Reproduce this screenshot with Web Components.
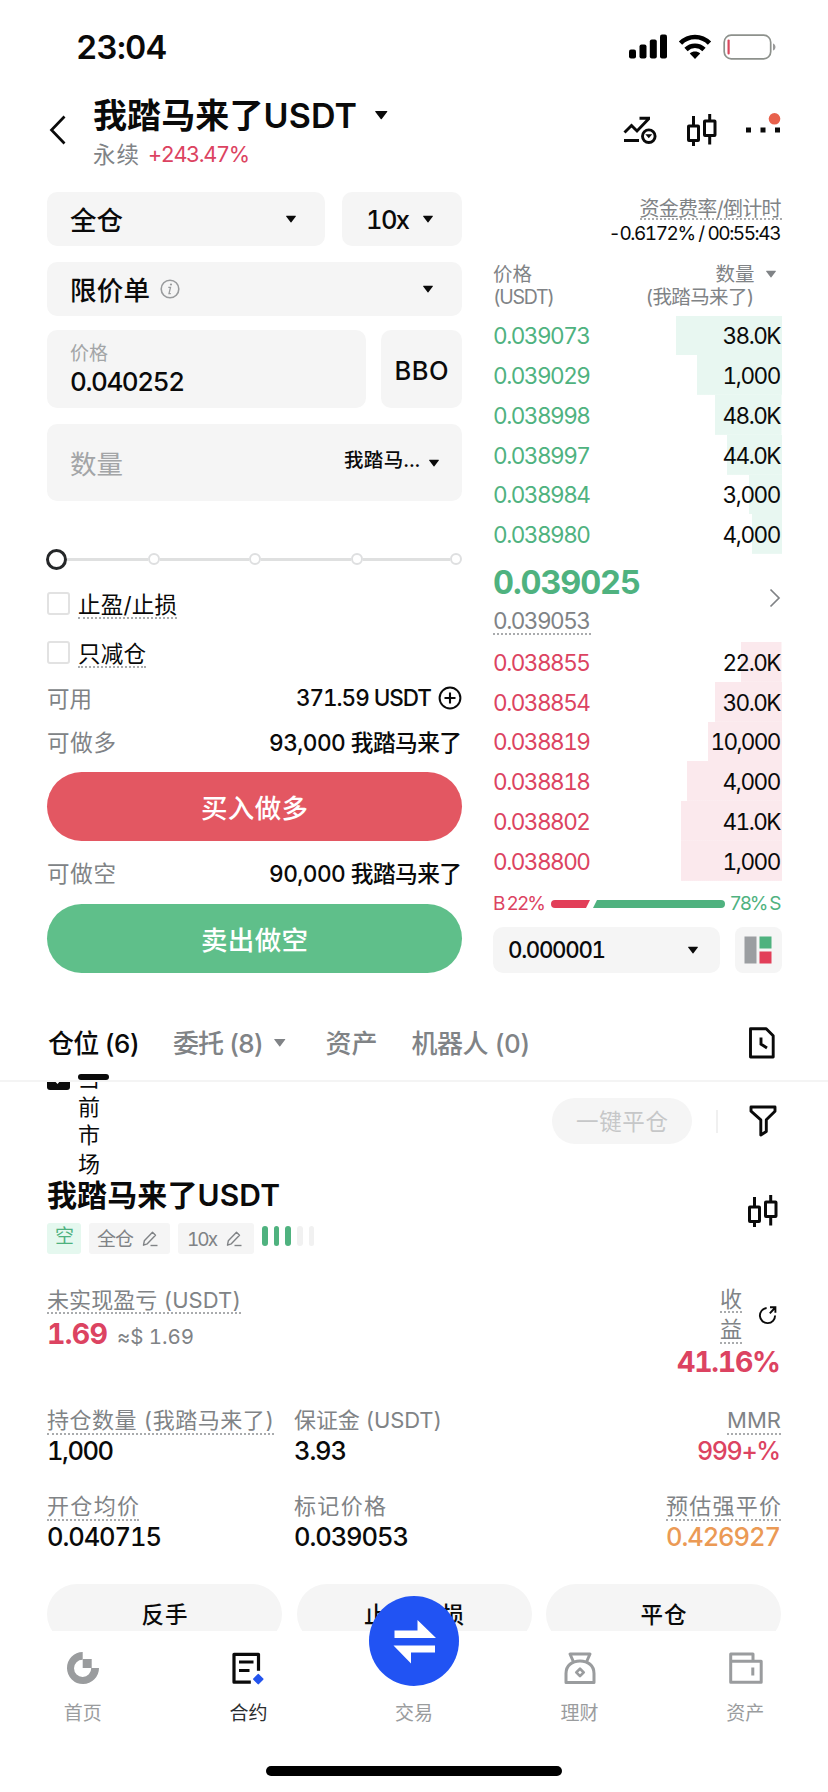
<!DOCTYPE html>
<html lang="zh-CN">
<head>
<meta charset="utf-8">
<title>合约交易</title>
<style>
body{margin:0;background:#fff;width:828px;height:1792px;overflow:hidden;color:#0a0a0a;
font-family:Inter,"Noto Sans CJK SC",sans-serif;
--gray:#808386;--box:#f5f5f5;--green:#4fb27f;--red:#dc4361}
</style>
</head>
<body>
<trade-app></trade-app>
<script>
function define(name,html,after){
  const tpl=document.createElement('template');
  tpl.innerHTML=html;
  customElements.define(name,class extends HTMLElement{
    connectedCallback(){
      if(this.shadowRoot)return;
      const r=this.attachShadow({mode:'open'});
      r.append(tpl.content.cloneNode(true));
      if(after)after(this,r);
    }
  });
}

/* Text label: s size, wt weight, c colour, lh line height, w set width (tracking adapts),
   u dotted underline, dy optical shift of the text inside its own box */
define('ui-text',`<style>
:host{display:block;flex:none;white-space:nowrap;box-sizing:content-box;font-variant-numeric:tabular-nums}
:host([u]){border-bottom:2px dotted #a9abad;margin-bottom:-2px}
span{display:inline-block;white-space:pre}
</style><span><slot></slot></span>`,(el,r)=>{
  const a=n=>el.getAttribute(n),sp=r.querySelector('span'),st=el.style,t=el.textContent;
  const cjk=/[\u4e00-\u9fff]/.test(t);
  st.fontSize=(a('s')||22)+'px';
  st.fontWeight=a('wt')||400;
  if(a('c'))st.color=a('c');
  const lh=+(a('lh')||24),dy=a('dy')!==null?+a('dy'):(cjk?1:0);
  st.lineHeight=(lh-2*Math.abs(dy))+'px';
  st[dy>0?'paddingTop':'paddingBottom']=2*Math.abs(dy)+'px';
  if(a('w')){
    const w=+a('w'),n=Math.max(1,[...t].length-1);
    const ls=(w-sp.getBoundingClientRect().width)/n;
    sp.style.letterSpacing=ls+'px';
    st.width=w+'px';
  }
});

const candles='<g fill="none" stroke="#0a0a0a" stroke-width="3"><rect x="1.500" y="12" width="10" height="14.500" rx=".5"/><path d="M6.500 2v10M6.500 26v6"/><rect x="17.500" y="7" width="10.500" height="14.500" rx=".5"/><path d="M22.700 0v7M22.700 21.500v9"/></g>';
const ICONS={
  signal:[38,26,'<rect y="15.500" width="7" height="9" rx="2"/><rect x="10.500" y="10.500" width="7" height="14" rx="2"/><rect x="20.800" y="5.500" width="7" height="19" rx="2"/><rect x="31" y=".5" width="7" height="24" rx="2"/>'],
  wifi:[32,26,'<g fill="none" stroke="#000" stroke-width="4.600"><path d="M1.500 9.200C9.500 .9 22.500 .9 30.500 9.200"/><path d="M7 15.500c5-5 13-5 18 0"/></g><path d="M10.800 19.500c3-2.600 7.400-2.600 10.400 0L16 25z"/>'],
  battery:[54,26,'<rect x="1.200" y="1.200" width="46.500" height="23.600" rx="7" fill="none" stroke="#8d918c" stroke-width="1.700"/><path d="M50 9.500c3.300 1 3.300 6 0 7z" fill="#9a9a9a"/><rect x="4.500" y="5.500" width="2.200" height="15" rx="1" fill="#d9475c"/>'],
  back:[18,30,'<path d="M15.500 1.500L2.500 15l13 13.500" fill="none" stroke="#0a0a0a" stroke-width="2.700"/>'],
  trend:[34,28,'<g fill="none" stroke="#0a0a0a" stroke-width="2.900"><path d="M1.500 16.500l7-7 5.500 5.500L26 2.500M16.500 2.200H27M1 24.500h15"/><circle cx="25.800" cy="20.200" r="6.300"/></g><path d="M22.300 18.300h7l-3.500 4z"/>'],
  candles:[30,32,candles],
  dots:[36,24,'<rect x="1" y="14.500" width="5" height="5"/><rect x="15.500" y="14.500" width="5" height="5"/><rect x="30" y="14.500" width="5" height="5"/><circle cx="29.500" cy="5.800" r="5.800" fill="#e8614c"/>'],
  tri:[10,8,'<path d="M.5 .8h9a.4.4 0 0 1 .3.600L5.400 7.200a.5.5 0 0 1-.8 0L.2 1.400A.4.4 0 0 1 .5 .8z"/>'],
  info:[20,20,'<circle cx="10" cy="10" r="8.800" fill="none" stroke="#999b9d" stroke-width="1.600"/><path d="M8.300 8.300h2.200L9 14.600h1.800" fill="none" stroke="#999b9d" stroke-width="1.300"/><circle cx="11" cy="5.500" r="1.100" fill="#999b9d"/>'],
  plus:[24,24,'<path d="M12 6.500v11M6.500 12h11" stroke="#0a0a0a" stroke-width="2.100"/><circle cx="12" cy="12" r="10.400" fill="none" stroke="#0a0a0a" stroke-width="2"/>'],
  next:[12,20,'<path d="M1.500 1.500l8.500 8.500-8.500 8.500" fill="none" stroke="#808386" stroke-width="1.700"/>'],
  layout:[28,28,'<rect x=".5" y=".5" width="12" height="27" fill="#9b9ea1"/><rect x="15.500" y=".5" width="12" height="12" fill="#4fb27f"/><rect x="15.500" y="15.500" width="12" height="12" fill="#e23f59"/>'],
  history:[28,32,'<g fill="none" stroke="#0a0a0a" stroke-width="2.900"><path d="M2.500 1.700h15.700l7 7V30H2.500z" stroke-linejoin="round"/><path d="M13 10.500v6.700l6 3.800"/></g>'],
  filter:[28,32,'<path d="M2 2h24v4.200l-8.700 8.600V26.500L11.800 30V14.800L2 6.200z" fill="none" stroke="#0a0a0a" stroke-width="2.900" stroke-linejoin="round"/>'],
  edit:[16,16,'<g fill="none" stroke="#808386" stroke-width="1.400"><path d="M1.500 14.200l.8-4.400L10.500 1.300l3 3L5.300 12.800z" stroke-linejoin="round"/><path d="M8.500 14.500h7"/></g>'],
  share:[20,20,'<g fill="none" stroke="#0a0a0a" stroke-width="1.900"><path d="M8.600 3A7.600 7.600 0 1 0 17.100 10.500"/><path d="M11.800 8.300L16.800 3M12 2.300h5.400v5.400"/></g>'],
  home:[34,34,'<path d="M16.700 1A16 16 0 1 0 33 17H25.200A8.600 8.600 0 1 1 16.700 8.700z" fill="#9a9c9e"/><rect x="16.700" y="8" width="9" height="9" fill="#9a9c9e"/>'],
  contract:[34,34,'<path d="M19.800 31.200H3V3.300h24.500v16.400M8 11h14.500M8 19.500h10.500" fill="none" stroke="#0a0a0a" stroke-width="3.200" stroke-linejoin="round"/><rect x="23.300" y="24.100" width="8" height="8" rx="1" fill="#2354ee" transform="rotate(45 27.300 28.100)"/>'],
  earn:[34,34,'<g fill="none" stroke="#9a9c9e" stroke-width="3" stroke-linejoin="round"><path d="M3 31.500V22.500C3 14.500 9 10 17 10s14 4.500 14 12.500v9z"/><path d="M10.300 10.500L7 3h20l-3.300 7.500"/><path d="M17 17.700l3.700 3.700-3.700 3.700-3.700-3.700z" stroke-width="2.700"/></g>'],
  asset:[34,34,'<path d="M2.700 31.300V3H25v7.300M2.700 10.300h30.500v21H2.700zM24.800 16.500v8" fill="none" stroke="#9a9c9e" stroke-width="3" stroke-linejoin="round"/>'],
  swap:[90,90,'<circle cx="45" cy="45" r="45" fill="#2153f3"/><path d="M25.500 34.500h23V24L67 42H25.500zM66 49.500H24.500L42 67.500V56.500h24z" fill="#fff"/>']
};
define('ui-icon','<style>:host{display:block;flex:none}svg{display:block;overflow:visible}</style>',(el,r)=>{
  const [w,h,p]=ICONS[el.getAttribute('n')],k=+(el.getAttribute('k')||1);
  const d=document.createElement('div');
  d.innerHTML=`<svg width="${w*k}" height="${h*k}" viewBox="0 0 ${w} ${h}" fill="${el.getAttribute('c')||'#0a0a0a'}">${p}</svg>`;
  r.append(d.firstChild);
});

/* Rounded grey field */
define('ui-box','<style>:host{display:flex;align-items:center;box-sizing:border-box;background:var(--box);border-radius:10px;flex:none}</style><slot></slot>');

define('status-bar',`<style>
:host{display:flex;height:94px;align-items:center;padding:0 51px 0 76px;box-sizing:border-box}
.s{margin-left:auto;display:flex;gap:12px;align-items:center}
</style><ui-text s="33" wt="600" w="91" lh="40">23:04</ui-text>
<div class="s"><ui-icon n="signal" c="#000"></ui-icon><ui-icon n="wifi" c="#000"></ui-icon><ui-icon n="battery"></ui-icon></div>`);

define('pair-header',`<style>
:host{display:flex;height:98px;padding:0 47px 0 49px;box-sizing:border-box}
.b{padding-top:21px;width:44px}
.t{display:flex;align-items:center;height:42px;gap:18px}
.p{display:flex;align-items:center;gap:9px;height:34px}
.i{margin-left:auto;display:flex;align-items:center;height:72px}
</style>
<ui-icon class="b" n="back"></ui-icon>
<div><div class="t"><ui-text s="34" wt="600" w="264" lh="42">我踏马来了USDT</ui-text><ui-icon n="tri" k="1.250"></ui-icon></div>
<div class="p"><ui-text c="var(--gray)" s="22.500" w="46" dy="2">永续</ui-text><ui-text c="var(--red)" s="21.700" w="102" dy="1">+243.47%</ui-text></div></div>
<div class="i"><ui-icon n="trend"></ui-icon><ui-icon n="candles" style="margin-left:30px"></ui-icon><ui-icon n="dots" style="margin:-10px 0 0 28px"></ui-icon></div>`);

define('amount-slider',`<style>
:host{display:flex;align-items:center;height:40px;margin:38px 0 0 -1px}
b{box-sizing:border-box;width:21px;height:21px;border:3px solid #252729;border-radius:50%;flex:none}
i{box-sizing:border-box;width:12px;height:12px;border:2px solid #dedfe0;border-radius:50%;flex:none}
s{height:3px;background:#dfe0e0;flex:1}
</style><b></b><s style="flex:81"></s><i></i><s style="flex:89"></s><i></i><s style="flex:90"></s><i></i><s style="flex:87"></s><i></i>`);

define('check-line',`<style>
:host{display:flex;align-items:center;height:40px;gap:8px}
i{box-sizing:border-box;width:23px;height:23px;border:2px solid #e2e2e2;border-radius:3px}
</style><i></i><slot></slot>`);

define('info-line','<style>:host{display:flex;align-items:center;justify-content:space-between;height:40px}</style><slot></slot>');
define('big-button','<style>:host{display:flex;align-items:center;justify-content:center;height:69px;border-radius:35px}</style><slot></slot>');

define('order-form',`<style>
:host{display:flex;flex-direction:column;width:415px}
.r{display:flex;justify-content:space-between}
ui-box{padding:0 29px 0 23px;justify-content:space-between}
.col{display:flex;flex-direction:column}
</style>
<div class="r"><ui-box style="width:278px;height:54px"><ui-text s="26.500" wt="500" w="53">全仓</ui-text><ui-icon n="tri"></ui-icon></ui-box>
<ui-box style="width:120px;height:54px;padding-left:24px"><ui-text s="25.500" wt="500" w="44" dy="1">10x</ui-text><ui-icon n="tri"></ui-icon></ui-box></div>
<ui-box style="height:54px;margin-top:16px"><ui-text s="26.500" wt="500" w="80">限价单</ui-text><ui-icon n="info" style="margin:0 auto 0 10px"></ui-icon><ui-icon n="tri"></ui-icon></ui-box>
<div class="r" style="margin-top:14px"><ui-box style="width:319px;height:78px"><div class="col"><ui-text s="19" w="38" c="#a3a5a7" lh="26">价格</ui-text><ui-text s="26" wt="500" w="115" lh="32">0.040252</ui-text></div></ui-box>
<ui-box style="width:81px;height:78px;padding:0;justify-content:center"><ui-text s="25.500" wt="500" w="54" dy="2">BBO</ui-text></ui-box></div>
<ui-box style="height:77px;margin-top:16px;padding-right:23px"><ui-text s="26.500" w="53" c="#a3a5a7">数量</ui-text><ui-text s="19.500" wt="500" w="76" style="margin:-7px 9px 0 auto">我踏马...</ui-text><ui-icon n="tri"></ui-icon></ui-box>
<amount-slider></amount-slider>
<check-line style="margin-top:4px"><ui-text u s="22.500" w="99" lh="27">止盈/止损</ui-text></check-line>
<check-line style="margin-top:9px"><ui-text u s="22.500" w="68" lh="27">只减仓</ui-text></check-line>
<info-line style="margin-top:6px"><ui-text s="22.500" w="45" c="var(--gray)">可用</ui-text><ui-text s="22.500" wt="500" w="136" style="margin:0 6px 0 auto">371.59 USDT</ui-text><ui-icon n="plus"></ui-icon></info-line>
<info-line style="margin-top:4px"><ui-text s="22.500" w="69" c="var(--gray)">可做多</ui-text><ui-text s="22.700" wt="500" w="193">93,000 我踏马来了</ui-text></info-line>
<big-button style="margin-top:10px;background:#e35762"><ui-text s="26.500" wt="500" w="107" c="#fff">买入做多</ui-text></big-button>
<info-line style="margin-top:12px"><ui-text s="22.500" w="69" c="var(--gray)">可做空</ui-text><ui-text s="22.700" wt="500" w="193">90,000 我踏马来了</ui-text></info-line>
<big-button style="margin-top:11px;background:#5fbf8a"><ui-text s="26.500" wt="500" w="107" c="#fff">卖出做空</ui-text></big-button>`);

define('book-row',`<style>
:host{display:flex;justify-content:space-between;align-items:center;height:39.75px;box-sizing:border-box;padding-top:2px}
</style>`,(el,r)=>{
  const a=n=>el.getAttribute(n),ask=a('side')==='g',q=a('q');
  const make=(t,w,c)=>{
    const x=document.createElement('ui-text');
    x.textContent=t;
    x.setAttribute('s','22.600');x.setAttribute('w',w);
    if(c)x.setAttribute('c',c);
    r.append(x);
  };
  make(a('p'),98,ask?'var(--green)':'var(--red)');
  make(q,q.length>5?71:59);
  el.style.background=`linear-gradient(${ask?'#e8f7f1,#e8f7f1':'#fbe9ed,#fbe9ed'}) right/${a('d')}px 100% no-repeat`;
});

define('order-book',`<style>
:host{display:flex;flex-direction:column;width:288.500px;margin-left:31px}
.e{display:flex;justify-content:flex-end}
.h{display:flex;justify-content:space-between;height:24px;align-items:center}
.m{display:flex;justify-content:space-between;align-items:center;height:88px;padding-right:1px}
.ratio{display:flex;align-items:center;height:20px;margin-top:13.500px;justify-content:space-between}
.ratio svg{display:block}
.f{display:flex;justify-content:space-between;margin-top:13px}
</style>
<div class="e" style="margin-top:4px"><ui-text u s="20" w="142" lh="22" dy="2" c="var(--gray)">资金费率/倒计时</ui-text></div>
<div class="e" style="margin-top:4px"><ui-text s="19" w="173">-0.6172% / 00:55:43</ui-text></div>
<div class="h" style="margin-top:16px"><ui-text s="19.500" w="39" dy="0" c="var(--gray)">价格</ui-text><ui-text s="19.500" w="39" dy="0" c="var(--gray)" style="margin:0 11px 0 auto">数量</ui-text><ui-icon n="tri" c="#808386" style="margin-right:6px"></ui-icon></div>
<div class="h"><ui-text s="19.500" w="62" dy="-1" c="var(--gray)">(USDT)</ui-text><ui-text s="19.500" w="109" dy="-.5" c="var(--gray)" style="margin-right:27px">(我踏马来了)</ui-text></div>
<div style="margin-top:5.500px">
<book-row side="g" p="0.039073" q="38.0K" d="106"></book-row><book-row side="g" p="0.039029" q="1,000" d="85"></book-row><book-row side="g" p="0.038998" q="48.0K" d="66.500"></book-row><book-row side="g" p="0.038997" q="44.0K" d="55"></book-row><book-row side="g" p="0.038984" q="3,000" d="33"></book-row><book-row side="g" p="0.038980" q="4,000" d="30"></book-row></div>
<div class="m"><div><ui-text s="32.500" wt="700" w="148" c="var(--green)" lh="40" dy="-1">0.039025</ui-text><ui-text u s="22.600" w="98" c="var(--gray)" lh="24" dy="-.5" style="margin-top:5px">0.039053</ui-text></div><ui-icon n="next"></ui-icon></div>
<div>
<book-row p="0.038855" q="22.0K" d="40.500"></book-row><book-row p="0.038854" q="30.0K" d="67"></book-row><book-row p="0.038819" q="10,000" d="74"></book-row><book-row p="0.038818" q="4,000" d="95"></book-row><book-row p="0.038802" q="41.0K" d="101"></book-row><book-row p="0.038800" q="1,000" d="101"></book-row></div>
<div class="ratio"><ui-text s="19" w="53" c="var(--red)">B 22%</ui-text><svg width="174" height="8"><path d="M4 0H39l-4 8H4a4 4 0 0 1 0-8z" fill="#e23f59"/><path d="M46 0H170a4 4 0 0 1 0 8H42z" fill="#4fb27f"/></svg><ui-text s="19" w="52" c="var(--green)">78% S</ui-text></div>
<div class="f"><ui-box style="width:227px;height:46px;padding:0 22px 0 15px;justify-content:space-between"><ui-text s="22.300" wt="500" w="98">0.000001</ui-text><ui-icon n="tri"></ui-icon></ui-box><ui-box style="width:47px;height:46px;justify-content:center;border-radius:8px"><ui-icon n="layout"></ui-icon></ui-box></div>`);

define('position-tabs',`<style>
:host{display:block;padding-top:40px;border-bottom:2px solid #f4f4f4;height:67px}
.r{display:flex;align-items:center;height:60px;padding:0 52px 0 48px}
.u{width:31px;height:6px;border-radius:3px;background:#0a0a0a;margin:1px 0 0 77.500px;position:relative}
</style><div class="r"><ui-text s="26" wt="500" w="92">仓位 (6)</ui-text>
<ui-text s="26" wt="500" w="91" c="var(--gray)" style="margin-left:33px">委托 (8)</ui-text><ui-icon n="tri" k="1.150" c="#808386" style="margin-left:10px"></ui-icon>
<ui-text s="26" wt="500" w="52" c="var(--gray)" style="margin-left:40px">资产</ui-text>
<ui-text s="26" wt="500" w="119" c="var(--gray)" style="margin-left:34px">机器人 (0)</ui-text>
<ui-icon n="history" style="margin-left:auto"></ui-icon></div><div class="u"></div>`);

define('position-tools',`<style>
:host{display:flex;height:95px;overflow:hidden;padding:0 51px 0 47px}
.c{width:23px;height:23px;background:#0a0a0a;border-radius:3px;margin-top:-15px;flex:none}
.v{margin:-19px 0 0 8px}
.r{margin-left:auto;display:flex;align-items:center;height:78px}
.d{width:2px;height:23px;background:#f0f0f0;margin:0 31px 0 24px}
</style><svg class="c" viewBox="0 0 23 23"><path d="M6 11l4.500 4.500L17 8" fill="none" stroke="#fff" stroke-width="2"/></svg>
<div class="v"><ui-text s="22" lh="28.700">当</ui-text><ui-text s="22" lh="28.700">前</ui-text><ui-text s="22" lh="28.700">市</ui-text><ui-text s="22" lh="28.700">场</ui-text></div>
<div class="r"><ui-box style="width:140px;height:46px;border-radius:23px;justify-content:center"><ui-text s="22.500" w="92" c="#c6c7c8">一键平仓</ui-text></ui-box><div class="d"></div><ui-icon n="filter"></ui-icon></div>`);

define('tag-box','<style>:host{display:flex;align-items:center;box-sizing:border-box;height:31px;padding:0 10px;gap:8px;background:#f5f5f5;border-radius:3px;margin-right:8px}</style><slot></slot>');

/* Captioned number */
define('stat-cell',`<style>
:host{display:flex;flex-direction:column;height:61px}
:host([end]){align-items:flex-end}
</style><slot name="k"></slot><slot name="v"></slot>`);

define('position-card',`<style>
:host{display:block;padding:0 47px}
.top{display:flex;justify-content:space-between;height:77px}
.tags{display:flex;height:31px;margin-top:12px}
.lv{display:flex;gap:6.200px;margin:3px 0 0 0}
.lv i{width:5.500px;height:20px;border-radius:3px;background:var(--green)}
.lv i.o{background:#f1f1f1}
.pnl{display:flex;justify-content:space-between;margin-top:30px;height:121px}
.v{display:flex;gap:9px;align-items:center;height:34px}
.roi{display:flex;flex-direction:column;align-items:flex-end}
.g{display:grid;grid-template-columns:247px 1fr auto;row-gap:25px}
stat-cell ui-text[slot=k]{margin-bottom:3px}
stat-cell ui-text[slot=k][u]{margin-bottom:1px}
.b{display:flex;justify-content:space-between;margin-top:32px}
.b ui-box{width:235px;height:60px;border-radius:30px;justify-content:center}
</style>
<div class="top"><div><ui-text s="30" wt="600" w="233" lh="34">我踏马来了USDT</ui-text>
<div class="tags"><tag-box style="background:#e5f8ef;padding:0 8px"><ui-text s="19" w="18" c="var(--green)" style="margin-top:-5px">空</ui-text></tag-box>
<tag-box style="padding:0 12px 0 8px"><ui-text s="19" w="37" c="var(--gray)">全仓</ui-text><ui-icon n="edit"></ui-icon></tag-box>
<tag-box style="padding:0 12px 0 9px"><ui-text s="19" w="31" c="var(--gray)" dy="1">10x</ui-text><ui-icon n="edit"></ui-icon></tag-box>
<div class="lv"><i></i><i></i><i></i><i class="o"></i><i class="o"></i></div></div></div>
<ui-icon n="candles" style="margin:18px 3px 0 0"></ui-icon></div>
<div class="pnl"><div><ui-text u s="22" w="194" lh="28" dy="2" c="var(--gray)">未实现盈亏 (USDT)</ui-text>
<div class="v" style="margin-top:5px"><ui-text s="28.500" wt="700" w="61" lh="34" c="var(--red)">1.69</ui-text><ui-text s="20.500" w="77" c="var(--gray)" style="margin-top:5px">≈$ 1.69</ui-text></div></div>
<div class="roi"><div style="display:flex;align-items:center;gap:16px;padding-right:3px"><div><ui-text u s="22" lh="27" dy="2" c="var(--gray)">收</ui-text><ui-text u s="22" lh="27" c="var(--gray)" style="margin-top:4px">益</ui-text></div><ui-icon n="share" style="margin-top:4px"></ui-icon></div>
<ui-text s="28.500" wt="700" w="104" lh="34" c="var(--red)" style="margin-top:3px">41.16%</ui-text></div></div>
<div class="g">
<stat-cell><ui-text slot="k" u s="22" w="227" lh="28" c="var(--gray)">持仓数量 (我踏马来了)</ui-text><ui-text slot="v" s="25.500" wt="500" w="67" lh="30">1,000</ui-text></stat-cell>
<stat-cell><ui-text slot="k" s="22" w="148" lh="28" c="var(--gray)">保证金 (USDT)</ui-text><ui-text slot="v" s="25.500" wt="500" w="53" lh="30">3.93</ui-text></stat-cell>
<stat-cell end><ui-text slot="k" u s="22" w="54" lh="28" dy="1" c="var(--gray)">MMR</ui-text><ui-text slot="v" s="25" wt="500" w="84" lh="30" c="var(--red)">999+%</ui-text></stat-cell>
<stat-cell><ui-text slot="k" u s="22" w="92" lh="28" c="var(--gray)">开仓均价</ui-text><ui-text slot="v" s="25.500" wt="500" w="115" lh="30">0.040715</ui-text></stat-cell>
<stat-cell><ui-text slot="k" s="22" w="92" lh="28" c="var(--gray)">标记价格</ui-text><ui-text slot="v" s="25.500" wt="500" w="115" lh="30">0.039053</ui-text></stat-cell>
<stat-cell end><ui-text slot="k" u s="22" w="115" lh="28" c="var(--gray)">预估强平价</ui-text><ui-text slot="v" s="25.500" wt="500" w="115" lh="30" c="#eb9a55">0.426927</ui-text></stat-cell>
</div>
<div class="b"><ui-box><ui-text s="22.500" wt="500" w="46">反手</ui-text></ui-box><ui-box><ui-text s="22.500" wt="500" w="100">止盈/止损</ui-text></ui-box><ui-box><ui-text s="22.500" wt="500" w="46">平仓</ui-text></ui-box></div>`);

define('nav-item',`<style>
:host{display:flex;flex-direction:column;align-items:center;flex:1}
.i{height:34px;display:flex;align-items:center;justify-content:center;margin-bottom:17px}
</style><div class="i"><slot name="icon"></slot></div><slot></slot>`);

define('bottom-nav',`<style>
:host{display:block;position:relative;height:161px;background:#fff}
.r{display:flex;padding-top:20px;height:115px}
.swap{margin-top:-54px}
.bar{width:296px;height:10px;border-radius:5px;background:#000;margin:0 auto}
</style><div class="r">
<nav-item><ui-icon slot="icon" n="home"></ui-icon><ui-text dy="0" s="19" w="38" c="#9a9c9e">首页</ui-text></nav-item>
<nav-item><ui-icon slot="icon" n="contract"></ui-icon><ui-text dy="0" s="19" w="38" c="#2b2d2f">合约</ui-text></nav-item>
<nav-item><ui-icon class="swap" slot="icon" n="swap"></ui-icon><ui-text dy="0" s="19" w="38" c="#9a9c9e">交易</ui-text></nav-item>
<nav-item><ui-icon slot="icon" n="earn"></ui-icon><ui-text dy="0" s="19" w="38" c="#9a9c9e">理财</ui-text></nav-item>
<nav-item><ui-icon slot="icon" n="asset"></ui-icon><ui-text dy="0" s="19" w="38" c="#9a9c9e">资产</ui-text></nav-item>
</div><div class="bar"></div>`);

define('trade-app',`<style>
:host{display:block;width:828px;height:1792px;overflow:hidden}
.p{display:flex;padding:0 0 0 47px;height:781px}
.list{height:549px;overflow:hidden}
</style>
<status-bar></status-bar><pair-header></pair-header>
<div class="p"><order-form></order-form><order-book></order-book></div>
<position-tabs></position-tabs>
<div class="list"><position-tools></position-tools><position-card></position-card></div>
<bottom-nav></bottom-nav>`);
</script>
</body>
</html>
